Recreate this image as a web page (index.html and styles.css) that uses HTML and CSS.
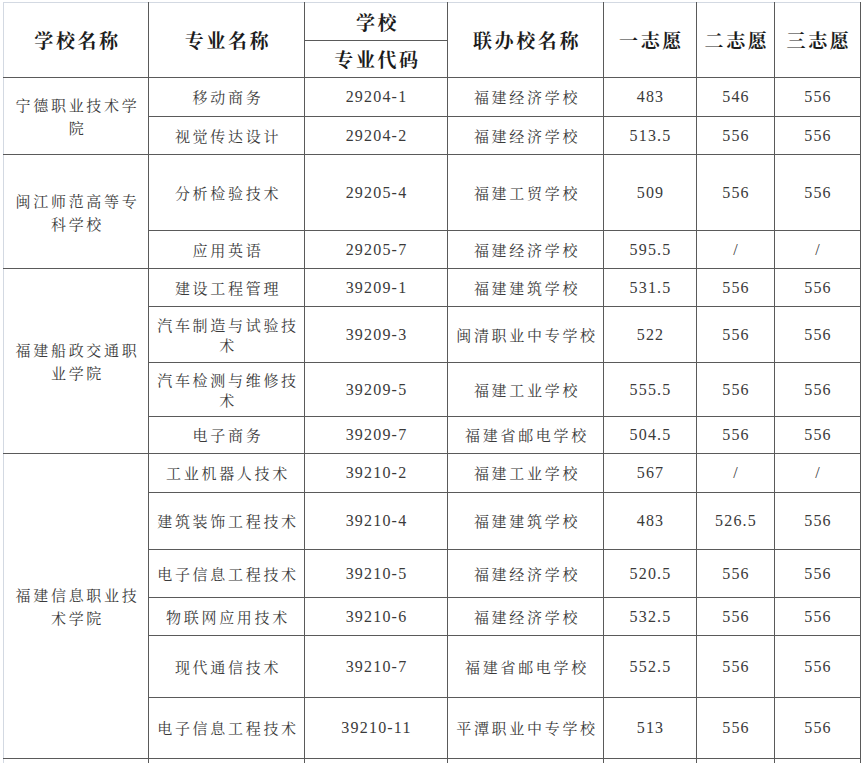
FILE: index.html
```html
<!DOCTYPE html>
<html lang="zh-CN">
<head>
<meta charset="utf-8">
<title>录取分数</title>
<link rel="stylesheet" href="styles.css">
</head>
<body>
<table class="grid">
  <colgroup>
    <col class="c1"><col class="c2"><col class="c3"><col class="c4"><col class="c5"><col class="c6"><col class="c7">
  </colgroup>
  <thead>
    <tr class="h38">
      <th rowspan="2" class="first">学校名称</th>
      <th rowspan="2">专业名称</th>
      <th class="split">学校</th>
      <th rowspan="2">联办校名称</th>
      <th rowspan="2" class="dot">一志愿</th>
      <th rowspan="2">二志愿</th>
      <th rowspan="2">三志愿</th>
    </tr>
    <tr class="h37">
      <th>专业代码</th>
    </tr>
  </thead>
  <tbody>
    <tr class="h39">
      <td rowspan="2" class="school first">宁德职业技术学院</td>
      <td class="major">移动商务</td><td class="num">29204-1</td><td class="partner">福建经济学校</td><td class="num dot">483</td><td class="num">546</td><td class="num">556</td>
    </tr>
    <tr class="h38">
      <td class="major">视觉传达设计</td><td class="num">29204-2</td><td class="partner">福建经济学校</td><td class="num dot">513.5</td><td class="num">556</td><td class="num">556</td>
    </tr>
    <tr class="h76">
      <td rowspan="2" class="school first">闽江师范高等专科学校</td>
      <td class="major">分析检验技术</td><td class="num">29205-4</td><td class="partner">福建工贸学校</td><td class="num dot">509</td><td class="num">556</td><td class="num">556</td>
    </tr>
    <tr class="h38">
      <td class="major">应用英语</td><td class="num">29205-7</td><td class="partner">福建经济学校</td><td class="num dot">595.5</td><td class="num">/</td><td class="num">/</td>
    </tr>
    <tr class="h38">
      <td rowspan="4" class="school first">福建船政交通职业学院</td>
      <td class="major">建设工程管理</td><td class="num">39209-1</td><td class="partner">福建建筑学校</td><td class="num dot">531.5</td><td class="num">556</td><td class="num">556</td>
    </tr>
    <tr class="h56">
      <td class="major">汽车制造与试验技术</td><td class="num">39209-3</td><td class="partner">闽清职业中专学校</td><td class="num dot">522</td><td class="num">556</td><td class="num">556</td>
    </tr>
    <tr class="h54">
      <td class="major">汽车检测与维修技术</td><td class="num">39209-5</td><td class="partner">福建工业学校</td><td class="num dot">555.5</td><td class="num">556</td><td class="num">556</td>
    </tr>
    <tr class="h37">
      <td class="major">电子商务</td><td class="num">39209-7</td><td class="partner">福建省邮电学校</td><td class="num dot">504.5</td><td class="num">556</td><td class="num">556</td>
    </tr>
    <tr class="h39">
      <td rowspan="6" class="school first">福建信息职业技术学院</td>
      <td class="major">工业机器人技术</td><td class="num">39210-2</td><td class="partner">福建工业学校</td><td class="num dot">567</td><td class="num">/</td><td class="num">/</td>
    </tr>
    <tr class="h57">
      <td class="major">建筑装饰工程技术</td><td class="num">39210-4</td><td class="partner">福建建筑学校</td><td class="num dot">483</td><td class="num">526.5</td><td class="num">556</td>
    </tr>
    <tr class="h48">
      <td class="major">电子信息工程技术</td><td class="num">39210-5</td><td class="partner">福建经济学校</td><td class="num dot">520.5</td><td class="num">556</td><td class="num">556</td>
    </tr>
    <tr class="h38">
      <td class="major">物联网应用技术</td><td class="num">39210-6</td><td class="partner">福建经济学校</td><td class="num dot">532.5</td><td class="num">556</td><td class="num">556</td>
    </tr>
    <tr class="h62">
      <td class="major">现代通信技术</td><td class="num">39210-7</td><td class="partner">福建省邮电学校</td><td class="num dot">552.5</td><td class="num">556</td><td class="num">556</td>
    </tr>
    <tr class="h61">
      <td class="major">电子信息工程技术</td><td class="num">39210-11</td><td class="partner">平潭职业中专学校</td><td class="num dot">513</td><td class="num">556</td><td class="num">556</td>
    </tr>
    <tr class="h30">
      <td class="first"></td><td></td><td></td><td></td><td class="dot"></td><td></td><td></td>
    </tr>
  </tbody>
</table>
</body>
</html>
```

FILE: styles.css
```css
html, body {
  margin: 0;
  padding: 0;
  background: #ffffff;
  overflow: hidden;
}

body {
  width: 864px;
  height: 763px;
  font-family: "Noto Serif CJK SC", "Noto Sans CJK SC", sans-serif;
  color: #3a3a3a;
}

.grid {
  border-collapse: collapse;
  table-layout: fixed;
  width: 857px;
  margin: 2px 0 0 3px;
  border-top: 1px solid #d3d9e2;
}

.c1 { width: 145px; }
.c2 { width: 156px; }
.c3 { width: 143px; }
.c4 { width: 156px; }
.c5 { width: 93px; }
.c6 { width: 78px; }
.c7 { width: 86px; }

th, td {
  border: 1px solid #5a5a5a;
  padding: 0;
  text-align: center;
  vertical-align: middle;
}

.grid thead tr:first-child th {
  border-top: 1px solid #d3d9e2;
}

th {
  font-size: 19px;
  font-weight: 700;
  color: #1c1c1c;
  letter-spacing: 2.6px;
  line-height: 24px;
  padding-left: 3px;
}

td {
  font-size: 15px;
  letter-spacing: 2.7px;
}

.first {
  border-left: 1px solid #d3d9e2;
}

.dot {
  border-left: 1px dotted #a8a8a8;
}

.school {
  padding: 0 8px 0 11px;
  line-height: 23px;
}

.major {
  padding: 0 4px 0 7px;
  line-height: 20px;
}

.partner {
  padding: 0 2px 0 5px;
  line-height: 20px;
}

.num {
  font-family: "Liberation Serif", "Noto Serif CJK SC", serif;
  font-size: 16px;
  letter-spacing: 1.2px;
  padding-left: 1px;
}

.h30 { height: 30px; }
.h37 { height: 37px; }
.h38 { height: 38px; }
.h39 { height: 39px; }
.h48 { height: 48px; }
.h54 { height: 54px; }
.h56 { height: 56px; }
.h57 { height: 57px; }
.h61 { height: 61px; }
.h62 { height: 62px; }
.h76 { height: 76px; }
```
